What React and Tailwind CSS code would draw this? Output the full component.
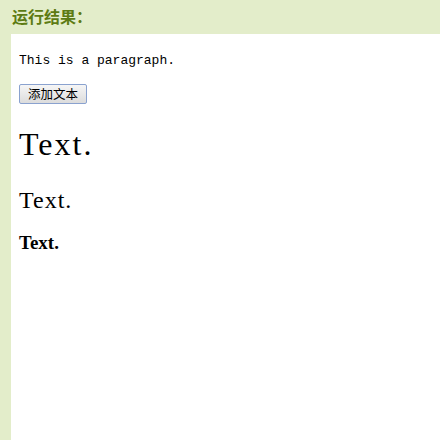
export default function App() {
  return (
    <div className="min-h-[440px] bg-[#e3edca] flex flex-col">
      {/* header */}
      <div className="h-[34px] pl-[12px] pt-[8px]">
        <h2 className="text-[16px] leading-none font-bold text-[#5d7b13] font-['Noto_Sans_CJK_SC',sans-serif]">
          运行结果：
        </h2>
      </div>

      {/* result panel */}
      <div className="ml-[11px] flex-1 bg-white pl-[8px] pt-[20px] pb-[40px] flex flex-col items-start">
        <p className="text-[13px] leading-none text-black font-['Liberation_Mono',monospace]">
          This is a paragraph.
        </p>

        <button className="mt-[17px] w-[68px] h-[20px] border border-[#8aa2cf] rounded-[2px] bg-linear-to-b from-[#f6f6f6] to-[#dcdcdc] text-[12.5px] leading-none text-black font-['Noto_Sans_CJK_SC',sans-serif] flex items-center justify-center">
          添加文本
        </button>

        <h1 className="mt-[24px] text-[32px] leading-none font-normal tracking-[2px] text-black font-['Liberation_Serif',serif]">
          Text.
        </h1>

        <h2 className="mt-[28px] text-[24px] leading-none font-normal tracking-[1px] text-black font-['Liberation_Serif',serif]">
          Text.
        </h2>

        <h3 className="mt-[21px] text-[19px] leading-none font-bold text-black font-['Liberation_Serif',serif]">
          Text.
        </h3>
      </div>
    </div>
  );
}
